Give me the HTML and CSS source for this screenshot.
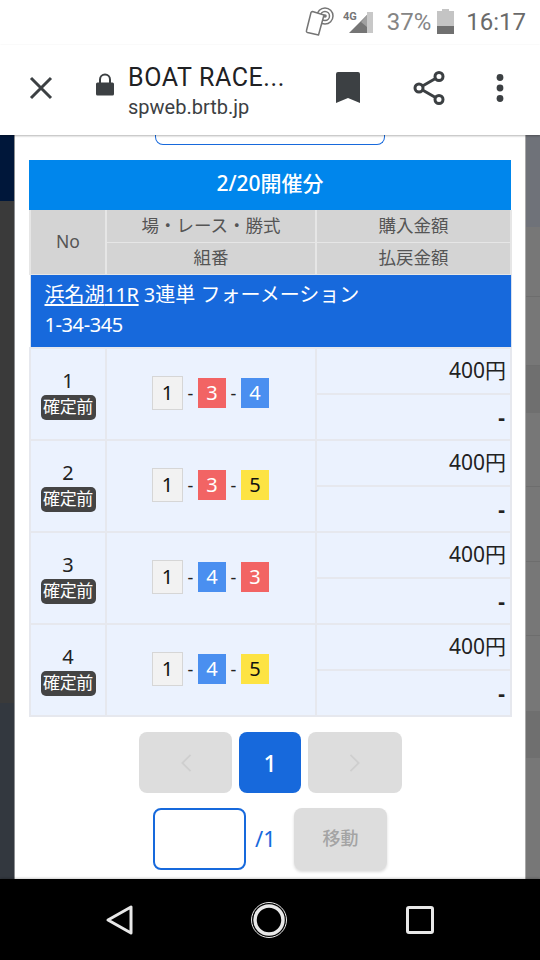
FILE: index.html
```html
<!DOCTYPE html>
<html lang="ja">
<head>
<meta charset="utf-8">
<title>BOAT RACE</title>
<link rel="stylesheet" href="styles.css">
</head>
<body>
<div class="phone">
  <header class="status">
    <svg class="st-nfc" viewBox="0 0 32 32" width="32" height="32"><g fill="none" stroke="#757575" stroke-width="1.500"><circle cx="21" cy="10" r="1.800" fill="#757575" stroke="none"/><circle cx="21" cy="10" r="4.500"/><circle cx="21" cy="10" r="8"/><path d="M8.500 5.500 20 9 14.500 29 3.500 26.500a1.500 1.500 0 0 1-1-2L7 6.500a1.500 1.500 0 0 1 1.500-1z" fill="#fff" stroke-linejoin="round"/></g></svg>
    <svg class="st-sig" viewBox="0 0 32 28" width="32" height="28"><text x="0" y="12" class="st-4g">4G</text><polygon points="6,25 24,7 24,25" fill="#757575"/><polygon points="24,4 30,4 30,25 24,25" fill="#c8c8c8"/><polygon points="18,14 24,7 24,19" fill="#a0a0a0"/></svg>
    <span class="st-pct">37%</span>
    <svg class="st-bat" viewBox="0 0 17 25" width="17" height="25"><rect x="5" y="0" width="7" height="3" fill="#c4c4c4"/><rect x="0" y="2" width="17" height="15" fill="#c4c4c4"/><rect x="0" y="17" width="17" height="8" fill="#707070"/></svg>
    <span class="st-time">16:17</span>
  </header>
  <nav class="toolbar">
    <svg class="tb-close" viewBox="0 0 24 24" width="24" height="24"><path d="M2 2 22 22M22 2 2 22" stroke="#3c4043" stroke-width="3" fill="none"/></svg>
    <svg class="tb-lock" viewBox="0 0 18 24" width="18" height="24"><path d="M1.500 9.500h15a1.500 1.500 0 0 1 1.500 1.500v10a1.500 1.500 0 0 1-1.500 1.500h-15A1.500 1.500 0 0 1 0 21V11a1.500 1.500 0 0 1 1.500-1.500z" fill="#3c4043"/><path d="M4 10V6.500a5 5 0 0 1 10 0V10" fill="none" stroke="#3c4043" stroke-width="2"/></svg>
    <div class="tb-title">
      <div class="tb-name">BOAT RACE...</div>
      <div class="tb-url">spweb.brtb.jp</div>
    </div>
    <svg class="tb-mark" viewBox="0 0 24 31" width="24" height="31"><path d="M2 0h20a2 2 0 0 1 2 2v29l-12-5-12 5V2a2 2 0 0 1 2-2z" fill="#3c4043"/></svg>
    <svg class="tb-share" viewBox="0 0 32 34" width="32" height="34"><g fill="none" stroke="#3c4043" stroke-width="3"><circle cx="6" cy="17" r="4"/><circle cx="26" cy="5.500" r="4"/><circle cx="26" cy="28.500" r="4"/><path d="M9.500 15 22.500 7.500M9.500 19 22.500 26.500"/></g></svg>
    <svg class="tb-more" viewBox="0 0 8 28" width="8" height="28"><g fill="#3c4043"><circle cx="4" cy="3.500" r="3.400"/><circle cx="4" cy="14" r="3.400"/><circle cx="4" cy="24.500" r="3.400"/></g></svg>
  </nav>
  <div class="content">
    <div class="side side-left">
      <div class="sl-a"></div><div class="sl-b"></div><div class="sl-c"></div>
    </div>
    <main class="panel">
      <div class="stub"></div>
      <h2 class="day">2/20開催分</h2>
      <table class="grid">
        <colgroup><col class="c1"><col class="c2"><col class="c3"></colgroup>
        <thead>
          <tr><th rowspan="2">No</th><th>場・レース・勝式</th><th>購入金額</th></tr>
          <tr><th>組番</th><th>払戻金額</th></tr>
        </thead>
        <tbody>
          <tr class="race"><td colspan="3"><a href="#">浜名湖<span class="tight">11R</span></a> 3連単 フォーメーション<br><span class="tight">1-34-345</span></td></tr>
          <tr class="r">
            <td rowspan="2" class="no"><div>1</div><span class="tag">確定前</span></td>
            <td rowspan="2"><div class="combo"><b class="k k1">1</b><i>-</i><b class="k k3">3</b><i>-</i><b class="k k4">4</b></div></td>
            <td class="amt">400円</td>
          </tr>
          <tr class="r"><td class="amt dash">-</td></tr>
          <tr class="r">
            <td rowspan="2" class="no"><div>2</div><span class="tag">確定前</span></td>
            <td rowspan="2"><div class="combo"><b class="k k1">1</b><i>-</i><b class="k k3">3</b><i>-</i><b class="k k5">5</b></div></td>
            <td class="amt">400円</td>
          </tr>
          <tr class="r"><td class="amt dash">-</td></tr>
          <tr class="r">
            <td rowspan="2" class="no"><div>3</div><span class="tag">確定前</span></td>
            <td rowspan="2"><div class="combo"><b class="k k1">1</b><i>-</i><b class="k k4">4</b><i>-</i><b class="k k3">3</b></div></td>
            <td class="amt">400円</td>
          </tr>
          <tr class="r"><td class="amt dash">-</td></tr>
          <tr class="r">
            <td rowspan="2" class="no"><div>4</div><span class="tag">確定前</span></td>
            <td rowspan="2"><div class="combo"><b class="k k1">1</b><i>-</i><b class="k k4">4</b><i>-</i><b class="k k5">5</b></div></td>
            <td class="amt">400円</td>
          </tr>
          <tr class="r"><td class="amt dash">-</td></tr>
        </tbody>
      </table>
      <div class="pager">
        <span class="pg pg-off"><svg viewBox="0 0 14 22" width="14" height="20"><path d="M12 2 3 11l9 9" fill="none" stroke="#cfcfcf" stroke-width="2"/></svg></span>
        <span class="pg pg-on">1</span>
        <span class="pg pg-off"><svg viewBox="0 0 14 22" width="14" height="20"><path d="M2 2l9 9-9 9" fill="none" stroke="#cfcfcf" stroke-width="2"/></svg></span>
      </div>
      <div class="jump">
        <input class="jump-in" type="text" aria-label="page">
        <span class="jump-of">/1</span>
        <span class="jump-btn">移動</span>
      </div>
    </main>
    <div class="side side-right">
      <div class="sr sr-a"></div><div class="sr sr-b"></div><div class="sr sr-c"></div><div class="sr sr-d"></div><div class="sr sr-e"></div><div class="sr sr-f"></div><div class="sr sr-g"></div><div class="sr sr-h"></div>
    </div>
  </div>
  <footer class="navbar">
    <svg viewBox="0 0 30 32" width="30" height="32"><path d="M26 3v26L3 16z" fill="none" stroke="#e8e8e8" stroke-width="3" stroke-linejoin="round"/></svg>
    <svg class="nav-home" viewBox="0 0 38 38" width="38" height="38"><circle cx="19" cy="19" r="17.500" fill="none" stroke="#e8e8e8" stroke-width="1"/><circle cx="19" cy="19" r="14" fill="none" stroke="#e8e8e8" stroke-width="3.500"/></svg>
    <svg viewBox="0 0 28 28" width="28" height="28"><rect x="1.500" y="1.500" width="25" height="25" rx="1.500" fill="none" stroke="#e8e8e8" stroke-width="3"/></svg>
  </footer>
</div>
</body>
</html>
```
FILE: styles.css
```css
* { box-sizing: border-box; }
html, body { margin: 0; padding: 0; }
body { font-family: "Noto Sans", "Noto Sans CJK JP", sans-serif; background: #fff; }
.phone { width: 540px; height: 960px; display: flex; flex-direction: column; overflow: hidden; }

.status { height: 45px; flex: none; display: flex; align-items: center; justify-content: flex-end; padding: 0 14px 2px 0; background: #fff; font-family: Roboto, sans-serif; color: #757575; }
.st-nfc { margin-right: 7px; }
.st-sig { margin-right: 12px; }
.st-4g { font: bold 11px Roboto, sans-serif; fill: #757575; }
.st-pct { font-size: 24px; margin-right: 6px; color: #858585; }
.st-bat { margin-right: 12px; }
.st-time { font-size: 24px; color: #6a6a6a; }

.toolbar { height: 90px; flex: none; display: flex; align-items: center; background: #fff; position: relative; z-index: 2; box-shadow: 0 1px 2px rgba(0,0,0,.3); padding-bottom: 5px; }
.tb-close { margin-left: 29px; flex: none; }
.tb-lock { margin-left: 43px; margin-top: -6px; flex: none; }
.tb-title { margin-left: 14px; margin-top: 6px; width: 208px; font-family: Roboto, sans-serif; color: #202124; }
.tb-name { font-size: 25px; line-height: 30px; letter-spacing: 0.6px; white-space: nowrap; }
.tb-url { font-size: 20px; line-height: 24px; color: #3c4043; margin-top: 2px; }
.tb-mark { flex: none; }
.tb-share { flex: none; margin-left: 53px; }
.tb-more { flex: none; margin-left: 51px; }

.content { flex: 1; display: flex; overflow: hidden; min-height: 0; }
.side { width: 15px; flex: none; display: flex; flex-direction: column; }
.side-left { border-right: 1px solid #8d8f92; }
.sl-a { height: 66px; background: #00173a; }
.sl-b { height: 502px; background: #3a3a3a; }
.sl-c { flex: 1; background: #33383f; }
.side-right { border-left: 1px solid #a8a8a8; }
.sr { border-bottom: 1px solid #6d6d6d; }
.sr-a { height: 92px; background: #6f7279; border-bottom: 0; }
.sr-b { height: 70px; background: #777; }
.sr-c { height: 69px; background: #777; }
.sr-d { height: 47px; background: #6f6f6f; border-bottom: 0; }
.sr-e { height: 74px; background: #777; }
.sr-f { height: 75px; background: #777; }
.sr-g { height: 74px; background: #777; }
.sr-h { flex: 1; background: linear-gradient(#777 75px, #6f6f6f 75px, #6f6f6f 122px, #777 122px); border-bottom: 0; }

.panel { flex: 1; min-width: 0; background: #fff; padding: 0 14px; color: #222; }
.stub { width: 230px; height: 10px; margin: 0 0 15px 126px; background: #fff; border: 1.5px solid #1769dc; border-top: 0; border-radius: 0 0 8px 8px; }
.day { margin: 0; height: 50px; line-height: 47px; text-align: center; background: #0086ec; color: #fff; font-size: 21px; font-weight: 500; }

.grid { width: 481px; table-layout: fixed; border-collapse: collapse; }
.c1 { width: 76px; }
.c2 { width: 210px; }
.c3 { width: 195px; }
.grid th { height: 32px; padding: 0 0 2px; background: #d4d4d4; border: 2px solid #e6e6e6; border-top-width: 1px; border-bottom-width: 1px; font-size: 17.500px; font-weight: 400; color: #555; line-height: 24px; }
.grid tr:first-child th { border-top: 0; }
.race td { height: 74px; padding: 5px 14px 0; background: #1769dc; border: 1px solid #d8e0ee; color: #fff; font-size: 20px; line-height: 30px; vertical-align: top; }
.race a { color: #fff; text-decoration: underline; text-underline-offset: 2px; }
.tight { letter-spacing: -0.400px; }
.r td { height: 46px; padding: 0; background: #ebf2fe; border: 2px solid #e6e8ee; text-align: center; font-size: 19px; color: #222; }
.r td.amt { text-align: right; padding: 0 4px 4px 0; font-size: 21px; }
.r td.dash { padding: 0 5px 0 0; font-weight: 700; }
.no { line-height: 24px; }
.no div { height: 26px; font-size: 20px; }
.tag { display: inline-block; width: 55px; height: 25px; line-height: 24px; border-radius: 5px; background: #444; color: #fff; font-size: 17px; letter-spacing: -0.300px; white-space: nowrap; vertical-align: top; }
.combo { display: flex; justify-content: center; align-items: center; gap: 4px; padding: 0 1px 2px 0; }
.combo i { font-style: normal; width: 7px; text-align: center; font-size: 18px; }
.k { display: block; width: 28px; height: 30px; line-height: 29px; font-weight: 400; font-size: 20px; text-align: center; }
.k1 { width: 31px; height: 34px; line-height: 31px; background: #f2f2f2; border: 1.500px solid #d6d6d6; color: #111; }
.k3 { background: #f26464; color: #fff; }
.k4 { background: #4a8ff0; color: #fff; }
.k5 { background: #fde343; color: #111; }

.pager { display: flex; gap: 7px; margin: 15px 0 15px 110px; }
.pg { display: flex; align-items: center; justify-content: center; height: 61px; border-radius: 8px; }
.pg-off { width: 93px; background: #ddd; }
.pg-off:last-child { width: 94px; }
.pg-on { width: 62px; background: #1769dc; color: #fff; font-size: 23px; font-weight: 500; }
.jump { display: flex; align-items: center; padding-left: 124px; }
.jump-in { width: 93px; height: 62px; border: 2px solid #1769dc; border-radius: 8px; background: #fff; padding: 0; outline: 0; }
.jump-of { width: 48px; padding-left: 9px; color: #1769dc; font-size: 22px; line-height: 60px; height: 62px; }
.jump-btn { width: 93px; height: 62px; line-height: 60px; text-align: center; background: #ddd; border-radius: 8px; color: #a4a4a4; font-size: 18px; font-weight: 500; box-shadow: 0 2px 3px rgba(0,0,0,.15); }

.navbar { height: 81px; flex: none; background: #000; display: flex; align-items: center; box-shadow: 0 -1px 2px rgba(0,0,0,.2); position: relative; padding-left: 105px; gap: 116.500px; }
.nav-home { margin: 0 2px 0 -2px; }
```
